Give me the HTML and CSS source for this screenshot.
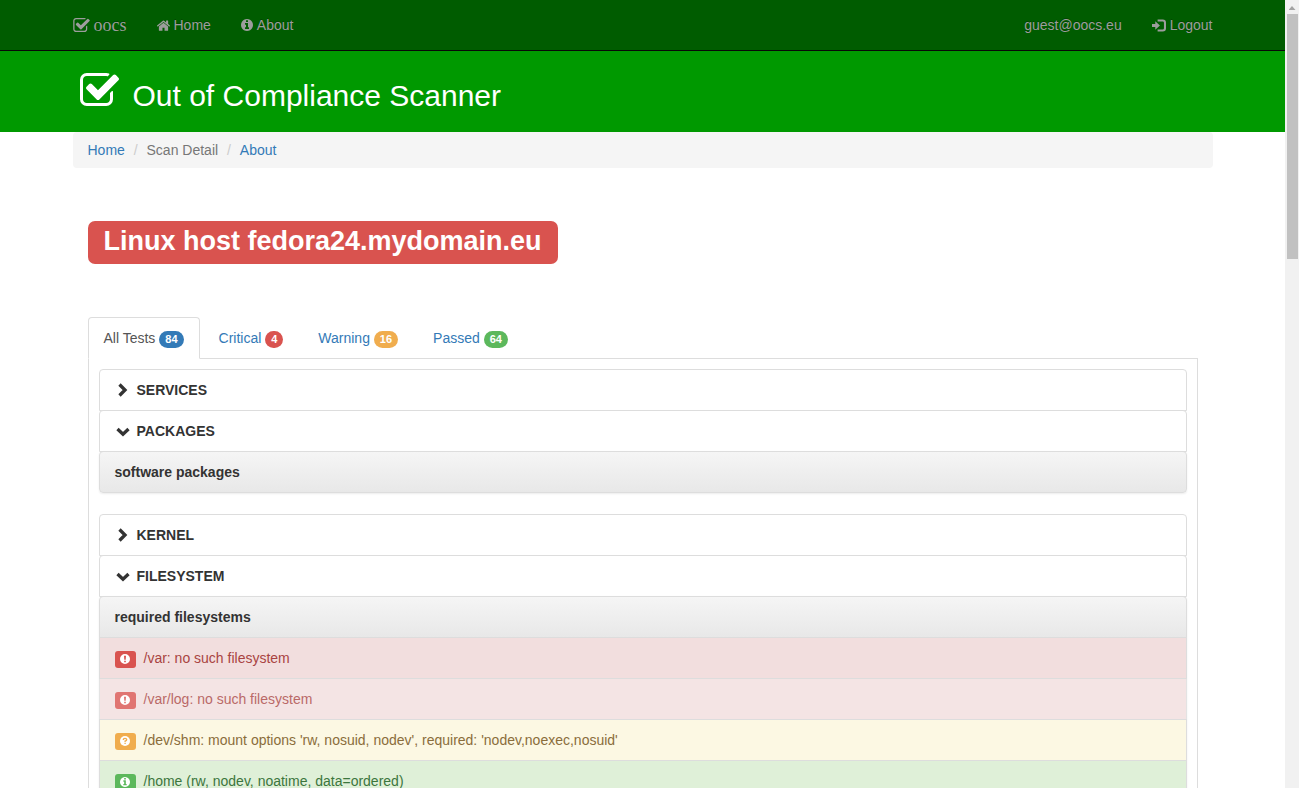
FILE: index.html
```html
<!DOCTYPE html>
<html lang="en">
<head>
<meta charset="utf-8">
<title>Out of Compliance Scanner</title>
<link rel="stylesheet" href="styles.css">
</head>
<body>
<svg class="sprite" aria-hidden="true">
  <symbol id="check" viewBox="64 128 1664 1408"><path d="M1472 930v318q0 119-84.500 203.500t-203.500 84.500h-832q-119 0-203.500-84.500t-84.500-203.500v-832q0-119 84.500-203.500t203.500-84.500h832q63 0 117 25 15 7 18 23 3 17-9 29l-49 49q-10 10-23 10-3 0-9-2-23-6-45-6h-832q-66 0-113 47t-47 113v832q0 66 47 113t113 47h832q66 0 113-47t47-113v-254q0-13 9-22l64-64q10-10 23-10 6 0 12 3 20 8 20 29zm231-489l-814 814q-24 24-57 24t-57-24l-430-430q-24-24-24-57t24-57l110-110q24-24 57-24t57 24l263 263 647-647q24-24 57-24t57 24l110 110q24 24 24 57t-24 57z"/></symbol>
  <symbol id="home" viewBox="88 200 1616 1336"><path d="M1472 992v480q0 26-19 45t-45 19h-384v-384h-256v384h-384q-26 0-45-19t-19-45v-480q0-1 .5-3t.5-3l575-474 575 474q1 2 1 6zm223-69l-62 74q-8 9-21 11h-3q-13 0-21-7l-692-577-692 577q-12 8-24 7-13-2-21-11l-62-74q-8-10-7-23.500t11-21.500l719-599q32-26 76-26t76 26l244 204v-195q0-14 9-23t23-9h192q14 0 23 9t9 23v408l219 182q10 8 11 21.500t-7 23.500z"/></symbol>
  <symbol id="info" viewBox="128 128 1536 1536"><path d="M1152 1376v-160q0-14-9-23t-23-9h-96v-512q0-14-9-23t-23-9h-320q-14 0-23 9t-9 23v160q0 14 9 23t23 9h96v320h-96q-14 0-23 9t-9 23v160q0 14 9 23t23 9h448q14 0 23-9t9-23zm-128-896v-160q0-14-9-23t-23-9h-192q-14 0-23 9t-9 23v160q0 14 9 23t23 9h192q14 0 23-9t9-23zm640 416q0 209-103 385.500t-279.500 279.500-385.500 103-385.500-103-279.500-279.500-103-385.500 103-385.500 279.500-279.500 385.500-103 385.500 103 279.500 279.500 103 385.500z"/></symbol>
  <symbol id="login" viewBox="0 0 15 13"><path d="M0 5h3.500V2L8.500 6.500 3.500 11V8H0z"/><path d="M6 1.100h5.500q2.400 0 2.400 2.400v6q0 2.400-2.400 2.400H6" fill="none" stroke="currentColor" stroke-width="2.200"/></symbol>
  <symbol id="right" viewBox="0 0 14 14"><path d="M3.500 1.500 9 7 3.500 12.500" fill="none" stroke="currentColor" stroke-width="3.300"/></symbol>
  <symbol id="down" viewBox="0 0 14 14"><path d="M1.500 5 7 10.200 12.500 5" fill="none" stroke="currentColor" stroke-width="3.300"/></symbol>
  <symbol id="exclaim" viewBox="0 0 10 10"><path fill-rule="evenodd" d="M5 0a5 5 0 1 1 0 10A5 5 0 0 1 5 0zM4 1.700l.3 4.100h1.400L6 1.700zM4.200 6.700v1.600h1.600V6.700z"/></symbol>
  <symbol id="question" viewBox="0 0 10 10"><circle cx="5" cy="5" r="5"/><path d="M3.300 3.900Q3.300 2.300 5 2.300T6.700 3.800Q6.700 4.700 5.100 5.100V6.100M5.100 6.800V8" fill="none" stroke="#f0ad4e" stroke-width="1.300"/></symbol>
</svg>
<div class="page">
  <nav class="navbar">
    <div class="container bar">
      <a class="brand" href="#"><svg class="icon-brand"><use href="#check"/></svg> oocs</a>
      <a href="#"><svg class="icon-home"><use href="#home"/></svg> Home</a>
      <a href="#"><svg class="icon-info"><use href="#info"/></svg> About</a>
      <a class="user" href="#">guest@oocs.eu</a>
      <a href="#"><svg class="icon-login"><use href="#login"/></svg> Logout</a>
    </div>
  </nav>
  <header class="banner">
    <div class="container title"><svg class="icon-title"><use href="#check"/></svg><h1>Out of Compliance Scanner</h1></div>
  </header>
  <main class="container">
    <ol class="breadcrumb">
      <li><a href="#">Home</a></li>
      <li>Scan Detail</li>
      <li><a href="#">About</a></li>
    </ol>
    <div class="content">
      <h2 class="host">Linux host fedora24.mydomain.eu</h2>
      <div class="tabs" role="tablist">
        <button class="tab active" role="tab" aria-selected="true">All Tests <span class="badge">84</span></button>
        <button class="tab" role="tab">Critical <span class="badge danger">4</span></button>
        <button class="tab" role="tab">Warning <span class="badge warning">16</span></button>
        <button class="tab" role="tab">Passed <span class="badge success">64</span></button>
      </div>
      <div class="panel" role="tabpanel">
        <section class="group">
          <button class="item section"><svg class="chevron"><use href="#right"/></svg>SERVICES</button>
          <button class="item section"><svg class="chevron"><use href="#down"/></svg>PACKAGES</button>
          <div class="list">
            <div class="item subhead">software packages</div>
          </div>
        </section>
        <section class="group">
          <button class="item section"><svg class="chevron"><use href="#right"/></svg>KERNEL</button>
          <button class="item section"><svg class="chevron"><use href="#down"/></svg>FILESYSTEM</button>
          <div class="list">
            <div class="item subhead">required filesystems</div>
            <div class="item row-danger"><span class="label danger"><svg><use href="#exclaim"/></svg></span>/var: no such filesystem</div>
            <div class="item row-danger faded"><span class="label danger"><svg><use href="#exclaim"/></svg></span>/var/log: no such filesystem</div>
            <div class="item row-warning"><span class="label warning"><svg><use href="#question"/></svg></span>/dev/shm: mount options 'rw, nosuid, nodev', required: 'nodev,noexec,nosuid'</div>
            <div class="item row-success"><span class="label success"><svg><use href="#info"/></svg></span>/home (rw, nodev, noatime, data=ordered)</div>
          </div>
        </section>
      </div>
    </div>
  </main>
</div>
<div class="scrollbar" aria-hidden="true"><div class="arrow"></div><div class="thumb"></div></div>
</body>
</html>
```
FILE: styles.css
```css
* { box-sizing: border-box; }
body {
  margin: 0;
  display: flex;
  height: 100vh;
  overflow: hidden;
  background: #fff;
  color: #333;
  font: 14px/20px "Liberation Sans", Arial, sans-serif;
}
.sprite { position: absolute; width: 0; height: 0; }
svg { fill: currentColor; }
a { color: #337ab7; text-decoration: none; }
button { font: inherit; cursor: pointer; }
.page { flex: 1; min-width: 0; overflow-y: auto; scrollbar-width: none; }
.container { max-width: 1170px; margin: 0 auto; padding: 0 15px; }

.navbar { background: #005c00; border-bottom: 1px solid #080808; }
.bar { display: flex; height: 50px; align-items: center; gap: 30px; }
.bar a { color: #9d9d9d; text-shadow: 0 -1px 0 rgba(0, 0, 0, .25); display: flex; align-items: center; gap: 4px; }
.bar .brand { font: 18px/20px "Liberation Serif", serif; }
.bar .user { margin-left: auto; }
.icon-brand { width: 17px; height: 14px; }
.icon-home { width: 13px; height: 11px; }
.icon-info { width: 12px; height: 12px; }
.icon-login { width: 14px; height: 13px; }

.banner { background: #090; color: #fff; }
.title { display: flex; align-items: flex-start; height: 81px; padding-top: 22px; gap: 14px; }
.title h1 { margin: 6px 0 0; font-size: 30px; line-height: 34px; font-weight: 400; }
.icon-title { width: 39px; height: 33px; margin-left: 7px; }

.breadcrumb { list-style: none; margin: 0; padding: 8px 15px; background: #f5f5f5; border-radius: 4px; color: #777; }
.breadcrumb li { display: inline-block; }
.breadcrumb li + li::before { content: "/\00a0"; padding: 0 5px; color: #ccc; }

.content { padding: 53px 15px 0; }
.host {
  width: fit-content;
  margin: 0 0 53px;
  padding: 5px 16px 8px;
  background: #d9534f;
  border-radius: 7px;
  color: #fff;
  font-size: 27px;
  line-height: 30px;
}
.tabs { display: flex; gap: 3px; border-bottom: 1px solid #ddd; }
.tab {
  margin-bottom: -1px;
  padding: 10px 15px;
  border: 1px solid transparent;
  border-radius: 4px 4px 0 0;
  background: none;
  color: #337ab7;
}
.tab.active { background: #fff; border-color: #ddd #ddd #fff; color: #555; }
.badge {
  display: inline-block;
  padding: 3px 6px;
  border-radius: 10px;
  background: #337ab7;
  color: #fff;
  font-size: 11px;
  font-weight: 700;
  line-height: 11px;
}
.badge.danger, .label.danger { background: #d9534f; }
.badge.warning, .label.warning { background: #f0ad4e; }
.badge.success, .label.success { background: #5cb85c; }

.panel { padding: 10px; border: solid #ddd; border-width: 0 1px; }
.group { margin-bottom: 21px; }
.item {
  display: flex;
  align-items: center;
  width: 100%;
  padding: 10px 15px;
  border: 1px solid #ddd;
  background: #fff;
  color: #333;
  text-align: left;
}
.item + .item, .list { margin-top: -1px; }
.section { font-weight: 700; border-radius: 4px 4px 0 0; }
.chevron { width: 14px; height: 14px; margin: 0 7px 0 1px; }
.list { border-radius: 4px; box-shadow: 0 1px 2px rgba(0, 0, 0, .075); }
.list .item:first-child { border-radius: 4px 4px 0 0; }
.list .item:last-child { border-radius: 0 0 4px 4px; }
.list .item:only-child { border-radius: 4px; }
.subhead { font-weight: 700; background: linear-gradient(#f5f5f5, #e8e8e8); }
.row-danger { background: #f2dede; color: #a94442; }
.row-warning { background: #fcf8e3; color: #8a6d3b; }
.row-success { background: #dff0d8; color: #3c763d; }
.faded { opacity: .8; }
.label {
  display: flex;
  justify-content: center;
  align-self: flex-end;
  width: 21px;
  height: 17px;
  padding-top: 3px;
  margin-right: 8px;
  border-radius: 3px;
  color: #fff;
}
.label svg { width: 10px; height: 10px; }

.scrollbar { width: 14px; background: #f1f1f1; }
.arrow { width: 7px; height: 4px; margin: 6px auto 4px; background: #a3a3a3; clip-path: polygon(50% 0, 100% 100%, 0 100%); }
.thumb { height: 245px; margin: 0 1px 0 2px; background: #c1c1c1; }
```
